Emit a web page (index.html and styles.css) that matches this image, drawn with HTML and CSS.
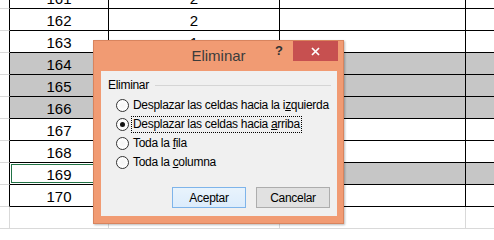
FILE: index.html
```html
<!DOCTYPE html>
<html lang="es">
<head>
<meta charset="utf-8">
<title>Eliminar</title>
<link rel="stylesheet" href="styles.css">
</head>
<body>
<div class="sheet">
  <div class="row"><div class="c0"></div><div class="c1">161</div><div class="c2">2</div><div class="c3"></div><div class="c4"></div></div>
  <div class="row"><div class="c0"></div><div class="c1">162</div><div class="c2">2</div><div class="c3"></div><div class="c4"></div></div>
  <div class="row"><div class="c0"></div><div class="c1">163</div><div class="c2">1</div><div class="c3"></div><div class="c4"></div></div>
  <div class="row gray"><div class="c0"></div><div class="c1">164</div><div class="c2"></div><div class="c3"></div><div class="c4"></div></div>
  <div class="row gray"><div class="c0"></div><div class="c1">165</div><div class="c2"></div><div class="c3"></div><div class="c4"></div></div>
  <div class="row gray"><div class="c0"></div><div class="c1">166</div><div class="c2"></div><div class="c3"></div><div class="c4"></div></div>
  <div class="row"><div class="c0"></div><div class="c1">167</div><div class="c2"></div><div class="c3"></div><div class="c4"></div></div>
  <div class="row"><div class="c0"></div><div class="c1">168</div><div class="c2"></div><div class="c3"></div><div class="c4"></div></div>
  <div class="row gray sel"><div class="c0"></div><div class="c1">169</div><div class="c2"></div><div class="c3"></div><div class="c4"></div></div>
  <div class="row"><div class="c0"></div><div class="c1">170</div><div class="c2"></div><div class="c3"></div><div class="c4"></div></div>
  <div class="row light"><div class="c0"></div><div class="c1"></div><div class="c2"></div><div class="c3"></div><div class="c4"></div></div>
</div>

<div class="dialog">
  <div class="titlebar">
    <span></span>
    <span class="title">Eliminar</span>
    <div class="controls">
      <span class="help">?</span>
      <span class="close"><svg width="9" height="9" viewBox="0 0 9 9"><path d="M1 1 L8 8 M8 1 L1 8" stroke="#fff" stroke-width="1.7" fill="none"/></svg></span>
    </div>
  </div>
  <div class="panel">
    <div class="group-head"><span class="group-label">Eliminar</span><span class="rule"></span></div>
    <div class="options">
      <div class="opt"><span class="radio"></span><span class="lbl">Desplazar las celdas hacia la i<u>z</u>quierda</span></div>
      <div class="opt"><span class="radio on"></span><span class="lbl focus">Desplazar las celdas hacia <u>a</u>rriba</span></div>
      <div class="opt"><span class="radio"></span><span class="lbl">Toda la <u>f</u>ila</span></div>
      <div class="opt"><span class="radio"></span><span class="lbl">Toda la <u>c</u>olumna</span></div>
    </div>
    <div class="buttons">
      <button class="btn default">Aceptar</button>
      <button class="btn">Cancelar</button>
    </div>
  </div>
</div>
</body>
</html>
```

FILE: styles.css
```css
html, body {
  margin: 0;
  padding: 0;
  width: 494px;
  height: 230px;
  overflow: hidden;
  background: #fff;
}

body {
  position: relative;
  font-family: "Liberation Sans", Arial, sans-serif;
}

/* ---------- spreadsheet ---------- */
.sheet {
  margin-top: -13px;
}

.row {
  display: grid;
  grid-template-columns: 10px 99px 171px 186px 1fr;
  height: 22px;
}

.row > div {
  box-sizing: border-box;
  height: 22px;
  border-right: 1px solid #000;
  border-bottom: 1px solid #000;
  font-size: 15px;
  line-height: 19px;
  padding-top: 2px;
  text-align: center;
  color: #000;
}

.row > .c0 {
  border-bottom-color: #d9d9d9;
}

.row > .c4 {
  border-right: none;
}

.row.gray > .c1,
.row.gray > .c2,
.row.gray > .c3,
.row.gray > .c4 {
  background: #c6c6c6;
}

.row.sel > .c1 {
  background: #fff;
  box-shadow: inset 0 0 0 1px #fff, inset 0 0 0 2px #217346;
}

.row.light > div {
  border-right-color: #d9d9d9;
  border-bottom-color: #d9d9d9;
}

/* ---------- dialog ---------- */
.dialog {
  position: absolute;
  left: 93px;
  top: 40px;
  width: 251px;
  height: 184px;
  box-sizing: border-box;
  background: #f19b73;
  border: 1px solid #d8845e;
  box-shadow: 1px 1px 2px rgba(0, 0, 0, 0.28);
  display: flex;
  flex-direction: column;
}

.titlebar {
  height: 30px;
  display: grid;
  grid-template-columns: 1fr auto 1fr;
}

.title {
  font-size: 15px;
  line-height: 18px;
  padding-top: 6px;
  color: #3c3c3c;
}

.controls {
  display: flex;
  justify-content: flex-end;
  align-items: flex-start;
}

.help {
  font-size: 13px;
  font-weight: bold;
  line-height: 20px;
  color: #333;
  margin-right: 10px;
}

.close {
  width: 45px;
  height: 20px;
  margin-right: 5px;
  background: #c75050;
  display: flex;
  align-items: center;
  justify-content: center;
}

.close svg {
  display: block;
}

.panel {
  margin: 0 6px 7px 7px;
  height: 145px;
  box-sizing: border-box;
  background: #f0f0f0;
  padding: 7px 6px 8px 7px;
  display: flex;
  flex-direction: column;
  font-size: 12px;
  letter-spacing: -0.3px;
  color: #000;
  white-space: nowrap;
}

.group-head {
  display: flex;
  align-items: center;
  height: 14px;
  line-height: 14px;
}

.group-label {
  margin-right: 6px;
}

.rule {
  flex: 1;
  border-top: 1px solid #d5d5d5;
}

.options {
  margin-top: 4px;
  padding-left: 8px;
}

.opt {
  display: flex;
  align-items: center;
  height: 19px;
}

.radio {
  flex: none;
  box-sizing: border-box;
  width: 13px;
  height: 13px;
  border: 1px solid #333;
  border-radius: 50%;
  background: radial-gradient(circle at 50% 50%, #f4f4f4 0, #fff 70%);
  margin-right: 2px;
  display: flex;
  align-items: center;
  justify-content: center;
}

.radio.on::after {
  content: "";
  width: 5px;
  height: 5px;
  border-radius: 50%;
  background: #111;
}

.lbl {
  border: 1px dotted transparent;
  padding: 0 1px;
  line-height: 15px;
}

.lbl.focus {
  border-color: #000;
}

.lbl u {
  text-decoration: underline;
  text-underline-offset: 1px;
}

.buttons {
  margin-top: auto;
  display: flex;
  justify-content: flex-end;
  gap: 10px;
  padding-right: 1px;
}

.btn {
  width: 74px;
  height: 21px;
  box-sizing: border-box;
  border: 1px solid #adadad;
  background: #e1e1e1;
  font-family: "Liberation Sans", Arial, sans-serif;
  font-size: 12px;
  letter-spacing: -0.3px;
  color: #000;
  padding: 0;
  margin: 0;
}

.btn.default {
  border-color: #7eb4ea;
  background: linear-gradient(#e8f3fc, #dcecfc);
}
```
